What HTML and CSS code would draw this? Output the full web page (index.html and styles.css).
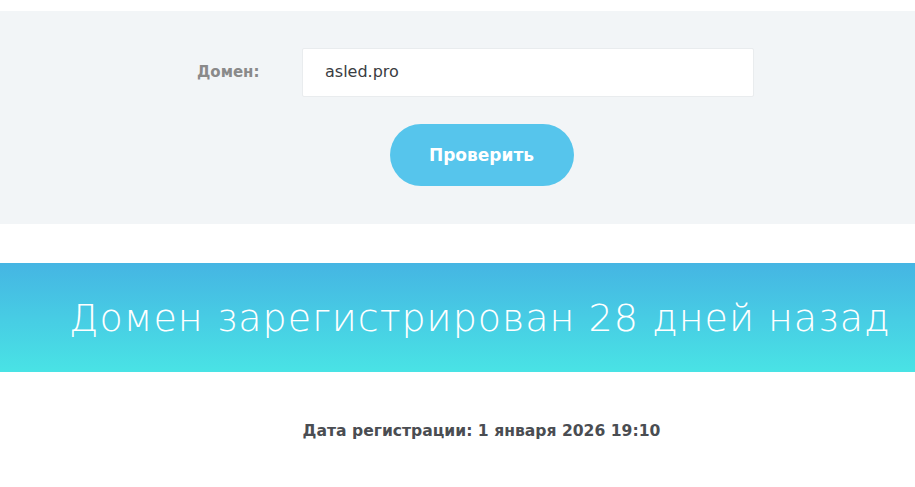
FILE: index.html
```html
<!DOCTYPE html>
<html lang="ru">
<head>
<meta charset="utf-8">
<link rel="stylesheet" href="styles.css">
</head>
<body>
<div class="page">
  <section class="check">
    <div class="row">
      <label class="label" for="domain">Домен:</label>
      <div class="input"><span id="domain">asled.pro</span></div>
    </div>
    <div class="actions">
      <button class="btn">Проверить</button>
    </div>
  </section>
  <section class="banner">
    <h1 class="title">Домен зарегистрирован 28 дней назад</h1>
  </section>
  <p class="date">Дата регистрации: 1 января 2026 19:10</p>
</div>
</body>
</html>
```
FILE: styles.css
```css
html, body {
  margin: 0;
  padding: 0;
  background: #fff;
}
.page {
  padding-top: 11px;
  font-family: "DejaVu Sans", "Noto Sans", sans-serif;
}
.check {
  background: #f2f5f7;
  height: 213px;
  box-sizing: border-box;
  padding-top: 37px;
}
.row {
  display: flex;
  align-items: center;
  height: 49px;
}
.label {
  width: 302px;
  box-sizing: border-box;
  padding-left: 197px;
  font-size: 15px;
  font-weight: bold;
  color: #8a8a8a;
  margin-top: -2px;
}
.input {
  width: 452px;
  height: 49px;
  box-sizing: border-box;
  background: #fff;
  border: 1px solid #e9ecee;
  border-radius: 2px;
  display: flex;
  align-items: center;
  padding-left: 22px;
  font-size: 16px;
  color: #3a3d42;
  padding-bottom: 3px;
}
.actions {
  display: flex;
  justify-content: center;
  margin-top: 27px;
  padding-left: 48px;
}
.btn {
  width: 184px;
  height: 62px;
  border: none;
  border-radius: 31px;
  background: #56c5ec;
  color: #fff;
  font-family: "DejaVu Sans", sans-serif;
  font-weight: bold;
  font-size: 17px;
  padding: 0;
}
.banner {
  margin-top: 39px;
  height: 109px;
  background: linear-gradient(to bottom, #45b5e3, #49e3e5);
  display: flex;
  align-items: center;
}
.title {
  margin: 0;
  padding-left: 69px;
  white-space: nowrap;
  font-family: "DejaVu Sans", sans-serif;
  font-weight: 200;
  font-size: 38px;
  color: #fff;
  letter-spacing: 1px;
}
.date {
  margin: 50px 0 0;
  text-align: center;
  font-size: 15.6px;
  font-weight: bold;
  color: #4a4d52;
  padding-left: 48px;
}
```
